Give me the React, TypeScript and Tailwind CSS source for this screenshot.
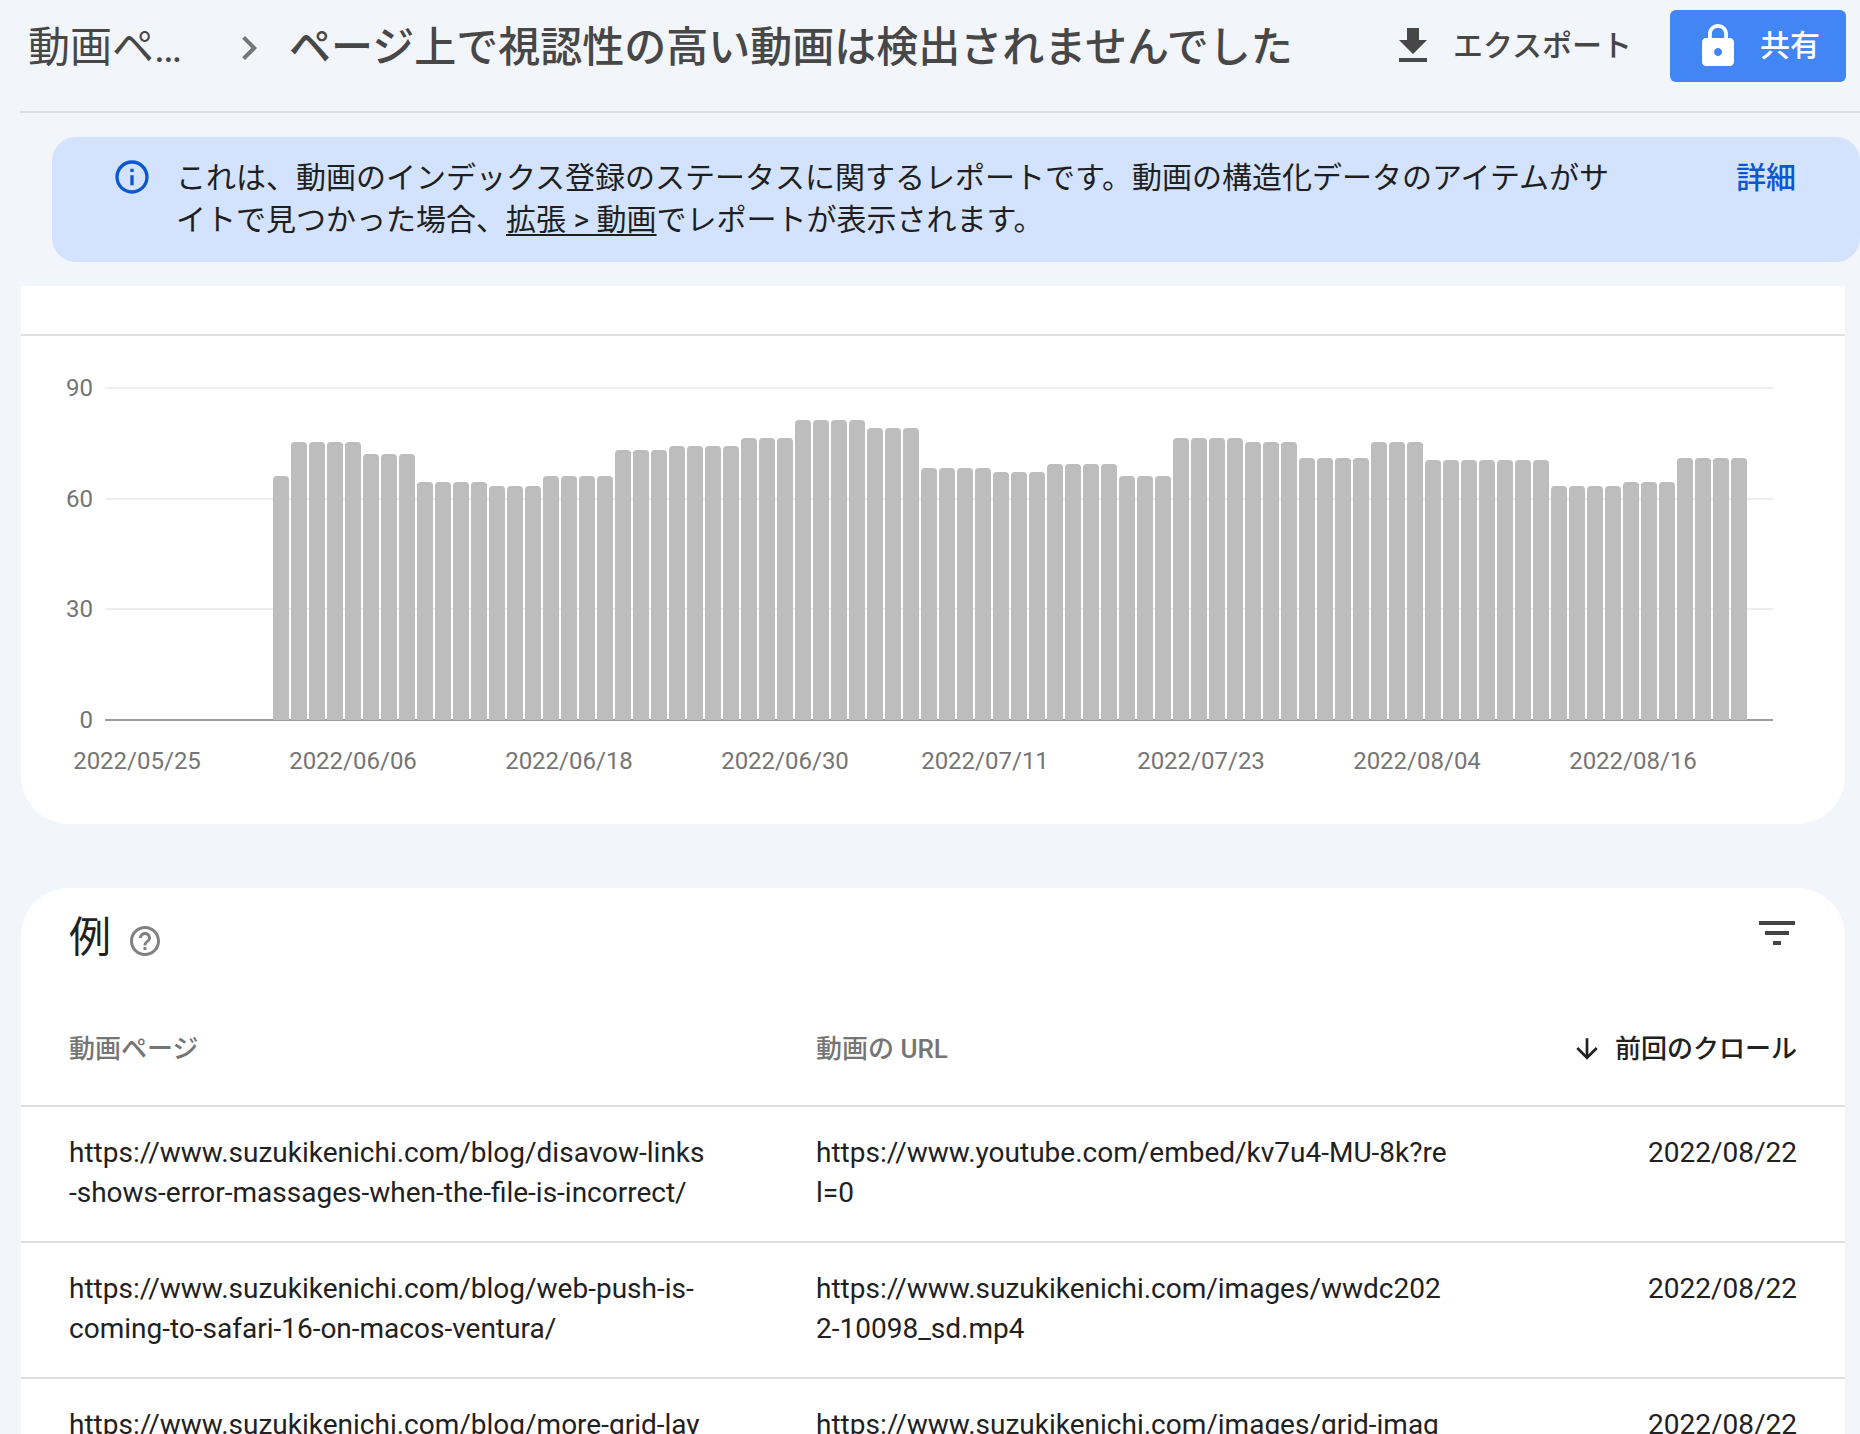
import {
  MdArrowDownward,
  MdChevronRight,
  MdFilterList,
  MdGetApp,
  MdHelpOutline,
  MdInfoOutline,
  MdLock,
} from "react-icons/md"

// [pages, days in a row with that count]
const runs: [number, number][] = [
  [66, 1], [75, 4], [72, 3], [64, 4], [63, 3], [66, 4], [73, 3], [74, 4],
  [76, 3], [81, 4], [79, 3], [68, 4], [67, 3], [69, 4], [66, 3], [76, 4],
  [75, 3], [71, 4], [75, 3], [70, 7], [63, 4], [64, 3], [71, 4],
]

const bars = runs.flatMap(([value, days]) => Array<number>(days).fill(value))

const ticks = [
  { label: "90", y: 52 },
  { label: "60", y: 163 },
  { label: "30", y: 273 },
]

const dates = [
  { label: "2022/05/25", x: 116 },
  { label: "2022/06/06", x: 332 },
  { label: "2022/06/18", x: 548 },
  { label: "2022/06/30", x: 764 },
  { label: "2022/07/11", x: 964 },
  { label: "2022/07/23", x: 1180 },
  { label: "2022/08/04", x: 1396 },
  { label: "2022/08/16", x: 1612 },
]

const rows = [
  {
    page: "https://www.suzukikenichi.com/blog/disavow-links-shows-error-massages-when-the-file-is-incorrect/",
    video: "https://www.youtube.com/embed/kv7u4-MU-8k?rel=0",
    crawled: "2022/08/22",
  },
  {
    page: "https://www.suzukikenichi.com/blog/web-push-is-coming-to-safari-16-on-macos-ventura/",
    video: "https://www.suzukikenichi.com/images/wwdc2022-10098_sd.mp4",
    crawled: "2022/08/22",
  },
  {
    page: "https://www.suzukikenichi.com/blog/more-grid-lay",
    video: "https://www.suzukikenichi.com/images/grid-imag",
    crawled: "2022/08/22",
  },
]

const BASELINE = 384

function barHeight(value: number) {
  return Math.ceil((value * 332) / 90 / 2) * 2
}

function Header() {
  return (
    <header className="ml-5 flex items-center border-b-2 border-[#dadfe0] pt-[10px] pr-[14px] pb-[29px] pl-2 text-[#474747]">
      <nav className="flex min-w-0 flex-1 items-center pt-1 text-[42px] leading-[56px]">
        <a href="#" className="w-[197px] shrink-0 whitespace-nowrap">
          動画ペ…
        </a>
        <MdChevronRight className="size-12 shrink-0 text-[#757575]" />
        <h1 className="ml-4 truncate font-medium">ページ上で視認性の高い動画は検出されませんでした</h1>
      </nav>
      <button className="flex shrink-0 items-center gap-4 text-[30px] leading-10 font-medium">
        <MdGetApp className="size-12" />
        エクスポート
      </button>
      <button className="ml-[38px] flex h-[72px] shrink-0 items-center gap-[18px] rounded-md bg-[#4285f4] pr-[26px] pl-6 text-[30px] leading-10 font-medium text-white">
        <MdLock className="size-12" />
        共有
      </button>
    </header>
  )
}

function Banner() {
  return (
    <section className="mt-6 ml-[52px] flex items-start rounded-3xl bg-[#d3e3fd] pt-5 pr-[64px] pb-[21px] pl-[60px] text-[30px] leading-[42px] text-[#1f1f1f]">
      <MdInfoOutline className="size-10 shrink-0 text-[#0b57d0]" />
      <p className="ml-6 max-w-[1450px] flex-1">
        これは、動画のインデックス登録のステータスに関するレポートです。動画の構造化データのアイテムがサイトで見つかった場合、
        <a href="#" className="underline decoration-2 underline-offset-4">
          拡張 &gt; 動画
        </a>
        でレポートが表示されます。
      </p>
      <a href="#" className="ml-auto shrink-0 font-medium text-[#0b57d0]">
        詳細
      </a>
    </section>
  )
}

function Chart() {
  return (
    <section className="mt-6 mr-[15px] ml-[21px] rounded-b-[48px] bg-white">
      <div className="h-[50px] border-b-2 border-[#e0e0e0]" />
      <svg viewBox="0 0 1824 488" className="block w-full" role="img" aria-label="動画ページ">
        {ticks.map((tick) => (
          <g key={tick.label}>
            <rect x="84" y={tick.y - 1} width="1668" height="2" fill="#eeeeee" />
            <text x="72" y={tick.y + 8} textAnchor="end" fontSize="24" fill="#757575">
              {tick.label}
            </text>
          </g>
        ))}
        <rect x="84" y={BASELINE - 1} width="1668" height="2" fill="#9e9e9e" />
        <text x="72" y={BASELINE + 8} textAnchor="end" fontSize="24" fill="#757575">
          0
        </text>
        {bars.map((value, i) => {
          const h = barHeight(value)
          const x = 252 + i * 18
          return (
            <path
              key={i}
              d={`M${x} ${BASELINE}v${4 - h}q0 -4 4 -4h8q4 0 4 4v${h - 4}z`}
              fill="#bdbdbd"
            />
          )
        })}
        {dates.map((date) => (
          <text key={date.label} x={date.x} y="433" textAnchor="middle" fontSize="24" fill="#757575">
            {date.label}
          </text>
        ))}
      </svg>
    </section>
  )
}

function Examples() {
  return (
    <section className="mt-16 mr-[15px] ml-[21px] rounded-t-[48px] bg-white text-[#212121]">
      <div className="flex items-center px-12 pt-5">
        <h2 className="text-[42px] leading-[60px]">例</h2>
        <button aria-label="ヘルプ" className="mt-1.5 ml-4 text-[#808080]">
          <MdHelpOutline className="size-9" />
        </button>
        <button aria-label="フィルタ" className="-mr-1 mb-2.5 ml-auto text-[#444444]">
          <MdFilterList className="size-12" />
        </button>
      </div>
      <table className="mt-[22px] w-full table-fixed border-collapse text-left">
        <colgroup>
          <col className="w-[747px]" />
          <col className="w-[748px]" />
          <col />
        </colgroup>
        <thead className="text-[26px] leading-10 text-[#757575]">
          <tr className="h-[116px] border-b-2 border-[#e0e0e0]">
            <th className="pt-0.5 pl-12 font-medium">動画ページ</th>
            <th className="pt-0.5 pl-12 font-medium">動画の URL</th>
            <th className="pt-0.5 pr-12 font-medium text-[#212121]">
              <button className="ml-auto flex items-center gap-3 whitespace-nowrap">
                <MdArrowDownward className="size-8" />
                前回のクロール
              </button>
            </th>
          </tr>
        </thead>
        <tbody className="text-[28px] leading-10">
          {rows.map((row) => (
            <tr key={row.page} className="h-[136px] border-b-2 border-[#e0e0e0] align-top">
              <td className="pt-[26px] pr-[63px] pl-12 break-all">{row.page}</td>
              <td className="pt-[26px] pr-16 pl-12 break-all">{row.video}</td>
              <td className="pt-[26px] pr-12 text-right">{row.crawled}</td>
            </tr>
          ))}
        </tbody>
      </table>
    </section>
  )
}

export default function App() {
  return (
    <main
      lang="ja"
      className="h-screen overflow-hidden bg-[#f2f5fa] font-['Roboto','Noto_Sans_CJK_JP',sans-serif]"
    >
      <Header />
      <Banner />
      <Chart />
      <Examples />
    </main>
  )
}
